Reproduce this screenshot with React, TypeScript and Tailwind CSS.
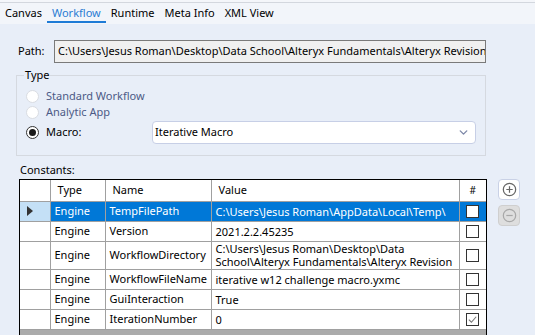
import { ChevronDown } from 'lucide-react'

const rows = [
  { type: 'Engine', name: 'TempFilePath', value: 'C:\\Users\\Jesus Roman\\AppData\\Local\\Temp\\', checked: false, selected: true },
  { type: 'Engine', name: 'Version', value: '2021.2.2.45235', checked: false },
  {
    type: 'Engine',
    name: 'WorkflowDirectory',
    value: 'C:\\Users\\Jesus Roman\\Desktop\\Data School\\Alteryx Fundamentals\\Alteryx Revision',
    checked: false,
    tall: true,
  },
  { type: 'Engine', name: 'WorkflowFileName', value: 'iterative w12 challenge macro.yxmc', checked: false },
  { type: 'Engine', name: 'GuiInteraction', value: 'True', checked: false },
  { type: 'Engine', name: 'IterationNumber', value: '0', checked: true },
]

const tabs = ['Canvas', 'Workflow', 'Runtime', 'Meta Info', 'XML View']

function Radio({ label, checked, disabled }: { label: string; checked?: boolean; disabled?: boolean }) {
  return (
    <div className="flex items-center gap-[7px] h-[16px]">
      <span
        className={`flex h-[13px] w-[13px] items-center justify-center rounded-full border bg-white ${
          disabled ? 'border-[#d9dce2]' : 'border-[#333]'
        }`}
      >
        {checked && <span className="h-[7px] w-[7px] rounded-full bg-[#1a1a1a]" />}
      </span>
      <span className={disabled ? 'text-[#4c5a86]' : 'text-black'}>{label}</span>
    </div>
  )
}

function Checkbox({ checked }: { checked: boolean }) {
  return (
    <span className="flex h-[13px] w-[13px] items-center justify-center border border-[#333] bg-white">
      {checked && (
        <svg viewBox="0 0 12 12" className="h-[11px] w-[11px]">
          <path d="M2 6.2 L4.8 9 L10 3" fill="none" stroke="#777" strokeWidth="1.2" />
        </svg>
      )}
    </span>
  )
}

export default function App() {
  return (
    <div
      className="w-[535px] h-[335px] overflow-hidden bg-[#e8eef8] text-[11px] text-black"
      style={{ fontFamily: '"Noto Sans", sans-serif' }}
    >
      {/* Tabs */}
      <div className="h-[2px] bg-[#f4f6fa]" />
      <div className="border-t border-[#d3d7de] bg-[#f2f5fa] h-[22px] flex items-start pl-[5px] gap-[10px]">
        {tabs.map((t) => (
          <div key={t} className="relative h-full flex items-center">
            <span className={t === 'Workflow' ? 'text-[#2b7cd3]' : ''}>{t}</span>
            {t === 'Workflow' && (
              <span className="absolute left-[-5px] right-[-5px] bottom-[1px] h-[2px] bg-[#1e7bd6]" />
            )}
          </div>
        ))}
      </div>

      <div className="pt-[16px] pl-[16px] pr-[49px]">
        {/* Path */}
        <div className="flex items-center">
          <span className="w-[38px] pl-[2px]">Path:</span>
          <div className="flex-1 h-[23px] border border-[#7a7a7a] bg-[#f0f0f0] px-[3px] flex items-center overflow-hidden whitespace-nowrap">
            C:\Users\Jesus Roman\Desktop\Data School\Alteryx Fundamentals\Alteryx Revision\
          </div>
        </div>

        {/* Type */}
        <fieldset className="mt-[4px] border border-[#d5d9e0] pl-[9px] pr-[9px] pb-[11px] pt-[5px]">
          <legend className="px-[1px] ml-[-2px] leading-[16px]">Type</legend>
          <Radio label="Standard Workflow" disabled />
          <Radio label="Analytic App" disabled />
          <div className="flex items-center h-[24px]">
            <div className="w-[126px]">
              <Radio label="Macro:" checked />
            </div>
            <div className="flex-1 h-[23px] rounded-[4px] border border-[#c7cfe6] bg-white flex items-center justify-between pl-[2px] pr-[5px]">
              <span>Iterative Macro</span>
              <ChevronDown className="h-[13px] w-[13px] text-[#7d88a8]" strokeWidth={2.5} />
            </div>
          </div>
        </fieldset>

        {/* Constants */}
        <div className="mt-[6px] pl-[4px] h-[16px] leading-[16px]">Constants:</div>
        <div className="flex items-start gap-[11px] mt-[1px]">
          <div className="w-[468px] shrink-0 border-[1.5px] border-black bg-[#ababab] h-[200px] overflow-hidden ml-[3px]">
            <table className="w-full border-collapse bg-white table-fixed">
              <colgroup>
                <col className="w-[30px]" />
                <col className="w-[55px]" />
                <col className="w-[106px]" />
                <col className="w-[248px]" />
                <col />
              </colgroup>
              <thead>
                <tr className="h-[21px]">
                  <th className="border-r border-b border-[#a0a0a0] font-normal" />
                  <th className="border-r border-b border-[#a0a0a0] font-normal text-left pl-[7px]">Type</th>
                  <th className="border-r border-b border-[#a0a0a0] font-normal text-left pl-[7px]">Name</th>
                  <th className="border-r border-b border-[#a0a0a0] font-normal text-left pl-[7px]">Value</th>
                  <th className="border-b border-[#a0a0a0] font-normal text-center text-[10px]">#</th>
                </tr>
              </thead>
              <tbody>
                {rows.map((r) => (
                  <tr key={r.name} className={r.tall ? 'h-[28px]' : 'h-[20px]'}>
                    <td className={`border-r border-b border-[#a0a0a0] ${r.selected ? 'bg-[#c4e0f6]' : 'bg-white'}`}>
                      {r.selected && (
                        <svg viewBox="0 0 8 10" className="ml-[6px] h-[10px] w-[8px]">
                          <path d="M1 0 L7 5 L1 10 Z" fill="#333" />
                        </svg>
                      )}
                    </td>
                    <td className={`border-r border-b border-[#a0a0a0] pl-[4px] ${r.selected ? 'bg-[#0078d7] text-white' : ''}`}>
                      {r.type}
                    </td>
                    <td className={`border-r border-b border-[#a0a0a0] pl-[4px] whitespace-nowrap overflow-hidden ${r.selected ? 'bg-[#0078d7] text-white' : ''}`}>
                      {r.name}
                    </td>
                    <td
                      className={`border-r border-b border-[#a0a0a0] pl-[4px] leading-[13px] overflow-hidden ${
                        r.tall ? '' : 'whitespace-nowrap'
                      } ${r.selected ? 'bg-[#0078d7] text-white' : ''}`}
                    >
                      {r.value}
                    </td>
                    <td className={`border-b border-[#a0a0a0] ${r.selected ? 'bg-[#0078d7]' : ''}`}>
                      <div className="flex justify-center">
                        <Checkbox checked={r.checked} />
                      </div>
                    </td>
                  </tr>
                ))}
              </tbody>
            </table>
          </div>

          <div className="flex flex-col gap-[5px]">
            <div className="h-[21px] w-[22px] rounded-[4px] border border-[#c9d1e6] bg-white flex items-center justify-center">
              <svg viewBox="0 0 16 16" className="h-[15px] w-[15px]">
                <circle cx="8" cy="8" r="6.6" fill="none" stroke="#666" strokeWidth="1.3" />
                <path d="M8 4.6 V11.4 M4.6 8 H11.4" stroke="#666" strokeWidth="1.3" />
              </svg>
            </div>
            <div className="h-[21px] w-[22px] rounded-[4px] border border-[#cfcfcf] bg-[#dedede] flex items-center justify-center">
              <svg viewBox="0 0 16 16" className="h-[15px] w-[15px]">
                <circle cx="8" cy="8" r="6.6" fill="none" stroke="#a8a8a8" strokeWidth="1.3" />
                <path d="M4.6 8 H11.4" stroke="#a8a8a8" strokeWidth="1.3" />
              </svg>
            </div>
          </div>
        </div>
      </div>
    </div>
  )
}
